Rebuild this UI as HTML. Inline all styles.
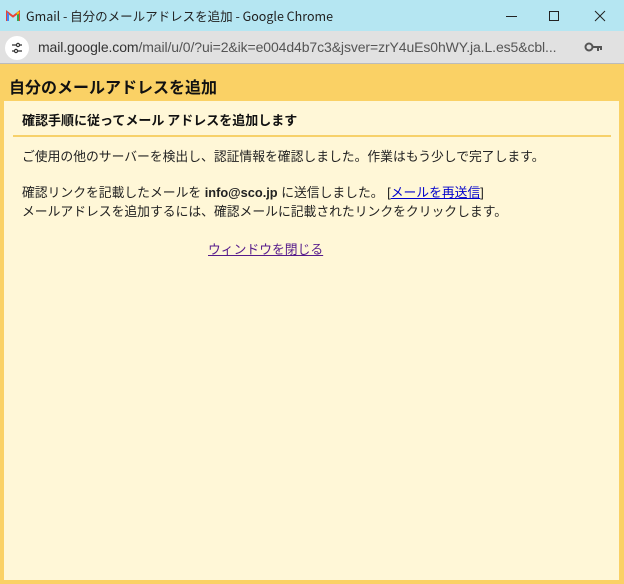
<!DOCTYPE html>
<html><head><meta charset="utf-8"><style>
*{margin:0;padding:0;box-sizing:border-box}
body{width:624px;height:584px;overflow:hidden;background:#fad165;font-family:"Liberation Sans","Noto Sans CJK JP",sans-serif;position:relative}
.tb{position:absolute;left:0;top:0;width:624px;height:31px;background:#b5e6f2;font-size:13px;color:#222}
.tb .t{position:absolute;left:26px;top:8px;font-family:"Noto Sans CJK JP",sans-serif;font-size:12.5px;line-height:16px}
.ab{position:absolute;left:0;top:31px;width:624px;height:33px;background:#e1e1e1;border-bottom:1px solid #bbb}
.ab .c{position:absolute;left:5px;top:5px;width:24px;height:24px;border-radius:50%;background:#fff}
.ab .u{position:absolute;left:38px;top:8px;font-size:14px;color:#333;white-space:nowrap;letter-spacing:-0.1px}
.ab .u span{color:#555}
.h1{position:absolute;left:9px;top:76px;font-size:16px;font-weight:bold;color:#111;font-family:"Noto Sans CJK JP",sans-serif;line-height:20px}
.p{position:absolute;left:4px;top:101px;width:615px;height:479px;background:#fff7d7}
.h2{position:absolute;left:18px;top:10px;font-size:13px;font-weight:bold;font-family:"Noto Sans CJK JP",sans-serif;line-height:18px;color:#111}
.ln{position:absolute;left:9px;top:34px;width:598px;height:2px;background:#f7d16a}
.tx{position:absolute;left:18px;font-size:12.8px;line-height:18px;color:#222;font-family:"Liberation Sans","Noto Sans CJK JP",sans-serif;white-space:nowrap}
a{color:#00c;text-decoration:underline}
</style></head><body>
<div class="tb">
<svg style="position:absolute;left:6px;top:10px" width="14" height="11" viewBox="0 0 14 11"><path d="M1 11V2l6 4.5L13 2v9" fill="none" stroke="#ea4335" stroke-width="2"/><path d="M1 2v9h2V4z" fill="#4285f4"/><path d="M13 2v9h-2V4z" fill="#34a853"/><path d="M11 4l2-2" stroke="#fbbc04" stroke-width="2"/></svg>
<div class="t">Gmail - 自分のメールアドレスを追加 - Google Chrome</div>
<svg style="position:absolute;left:506px;top:10px" width="110" height="12"><path d="M0 6.5h11" stroke="#222" stroke-width="1"/><rect x="43.5" y="1.5" width="9" height="9" fill="none" stroke="#222"/><path d="M89 1l10 10M99 1L89 11" stroke="#222"/></svg>
</div>
<div class="ab"><div class="c"><svg width="24" height="24"><path d="M7 9h4M7 15h2M13 15h4M15 9h2" stroke="#333" stroke-width="1.3"/><circle cx="13" cy="9" r="1.6" fill="none" stroke="#333" stroke-width="1.2"/><circle cx="11" cy="15" r="1.6" fill="none" stroke="#333" stroke-width="1.2"/></svg></div>
<div class="u">mail.google.com<span>/mail/u/0/?ui=2&amp;ik=e004d4b7c3&amp;jsver=zrY4uEs0hWY.ja.L.es5&amp;cbl...</span></div>
<svg style="position:absolute;left:584px;top:11px" width="20" height="10"><circle cx="5" cy="5" r="3.5" fill="none" stroke="#555" stroke-width="2"/><path d="M8 5h10M14 5v4M17 5v3" stroke="#555" stroke-width="2"/></svg>
</div>
<div class="h1">自分のメールアドレスを追加</div>
<div class="p">
<div class="h2">確認手順に従ってメール アドレスを追加します</div>
<div class="ln"></div>
<div class="tx" style="top:47px">ご使用の他のサーバーを検出し、認証情報を確認しました。作業はもう少しで完了します。</div>
<div class="tx" style="top:83px">確認リンクを記載したメールを <b>info@sco.jp</b> に送信しました。 [<a href="#">メールを再送信</a>]</div>
<div class="tx" style="top:102px">メールアドレスを追加するには、確認メールに記載されたリンクをクリックします。</div>
<div class="tx" style="top:140px;left:204px"><a href="#" style="color:#551a8b">ウィンドウを閉じる</a></div>
</div>
</body></html>
